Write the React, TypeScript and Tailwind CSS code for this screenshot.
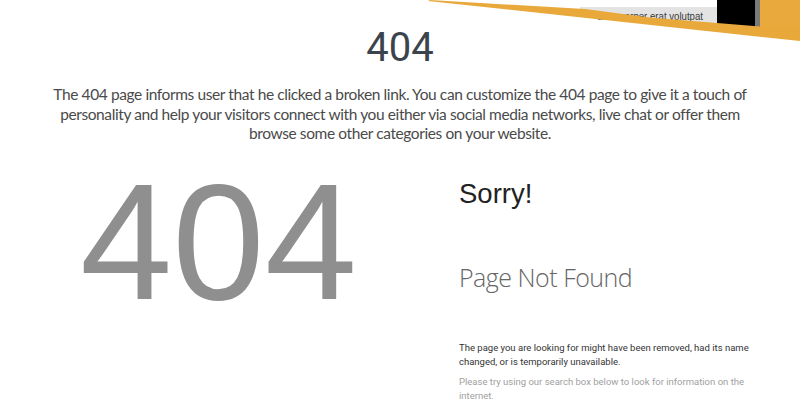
import React from "react";

function Decoration() {
  return (
    <svg
      className="absolute left-0 top-0 pointer-events-none"
      width="800"
      height="45"
      viewBox="0 0 800 45"
    >
      <polygon points="580,7 717,7 717,25 580,15" fill="#e3e3e3" />
      <text
        x="597"
        y="19.5"
        fontSize="11"
        fill="#3a3a3a"
        fontFamily="'Liberation Sans', Arial, sans-serif"
        textLength="106"
        lengthAdjust="spacingAndGlyphs"
      >
        ullamcorper erat volutpat
      </text>
      <rect x="717" y="0" width="38" height="28" fill="#000" />
      <rect x="755" y="0" width="5" height="30" fill="#7a7a7a" />
      <rect x="760" y="0" width="40" height="30" fill="#eaa93c" />
      <polygon
        points="430,0 585,9 650,17.5 717,23 760,26.5 800,27 800,41 428,1"
        fill="#e8a83a"
      />
    </svg>
  );
}

export default function App() {
  return (
    <div className="relative w-[800px] h-[415px] overflow-hidden bg-white">
      <Decoration />
      <h1
        className="pt-[28px] text-center text-[40px] leading-[40px] font-normal text-[#3b444d]"
        style={{ fontFamily: "Roboto, 'Liberation Sans', sans-serif" }}
      >
        404
      </h1>
      <p
        className="mt-[17px] whitespace-nowrap text-center text-[15.5px] leading-[19.5px] tracking-[-0.4px] text-[#4a4a4a]"
        style={{ fontFamily: "Lato, Roboto, sans-serif" }}
      >
        The 404 page informs user that he clicked a broken link. You can
        customize the 404 page to give it a touch of
        <br />
        personality and help your visitors connect with you either via social
        media networks, live chat or offer them
        <br />
        browse some other categories on your website.
      </p>
      <div className="mt-[15.5px] flex">
        <div className="w-[459px] pl-[80px]">
          <div
            className="text-[166px] leading-[165px] text-[#8f8f8f]"
            style={{ fontFamily: "'Liberation Sans', Arial, sans-serif" }}
          >
            404
          </div>
        </div>
        <div className="flex-1 pt-[19px]">
          <div
            className="text-[27.5px] leading-[32px] text-[#222]"
            style={{ fontFamily: "'Liberation Sans', Arial, sans-serif" }}
          >
            Sorry!
          </div>
          <div
            className="mt-[50px] text-[25px] leading-[34px] font-light tracking-[-0.5px] text-[#666]"
            style={{ fontFamily: "'Open Sans', sans-serif" }}
          >
            Page Not Found
          </div>
          <div
            className="mt-[47px] w-[300px] text-[9.5px] leading-[14px]"
            style={{ fontFamily: "Roboto, 'Liberation Sans', sans-serif" }}
          >
            <p className="text-[#333]">
              The page you are looking for might have been removed, had its name
              changed, or is temporarily unavailable.
            </p>
            <p className="mt-[6px] text-[#a0a0a0]">
              Please try using our search box below to look for information on
              the internet.
            </p>
          </div>
        </div>
      </div>
    </div>
  );
}
